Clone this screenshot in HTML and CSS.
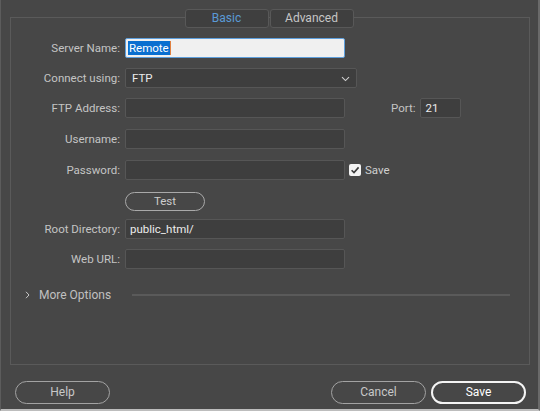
FILE: index.html
```html
<!DOCTYPE html>
<html>
<head>
<meta charset="utf-8">
<link rel="stylesheet" href="styles.css">
</head>
<body>
<div class="dialog">
  <div class="panel">
    <div class="tabs">
      <div class="tab tab-active">Basic</div>
      <div class="tab">Advanced</div>
    </div>
    <div class="form">
      <div class="row r-first">
        <label class="label">Server Name:</label>
        <div class="field field-focus"><span class="sel">Remote</span><span class="caret"></span></div>
      </div>
      <div class="row r10">
        <label class="label">Connect using:</label>
        <div class="field select">
          <span>FTP</span>
          <svg class="chev" width="9" height="6" viewBox="0 0 9 6"><path d="M1 1.2 L4.5 4.6 L8 1.2" fill="none" stroke="#cfcfcf" stroke-width="1.1"/></svg>
        </div>
      </div>
      <div class="row r10">
        <label class="label">FTP Address:</label>
        <div class="field"></div>
        <label class="label-port">Port:</label>
        <div class="field port">21</div>
      </div>
      <div class="row r11">
        <label class="label">Username:</label>
        <div class="field"></div>
      </div>
      <div class="row r11">
        <label class="label">Password:</label>
        <div class="field"></div>
        <span class="check">
          <svg width="12" height="12" viewBox="0 0 12 12"><rect x="0" y="0" width="12" height="12" rx="2" fill="#f2f2f2"/><path d="M2.6 6.2 L5 8.6 L9.6 3.4" fill="none" stroke="#3a3a3a" stroke-width="1.6"/></svg>
        </span>
        <span class="check-label">Save</span>
      </div>
      <div class="row r11">
        <span class="label"></span>
        <div class="btn-test">Test</div>
      </div>
      <div class="row r8">
        <label class="label">Root Directory:</label>
        <div class="field">public_html/</div>
      </div>
      <div class="row r10">
        <label class="label">Web URL:</label>
        <div class="field"></div>
      </div>
      <div class="more">
        <svg class="more-chev" width="5" height="8" viewBox="0 0 5 8"><path d="M1 0.8 L4 4 L1 7.2" fill="none" stroke="#c8c8c8" stroke-width="1"/></svg>
        <span class="more-text">More Options</span>
        <span class="more-line"></span>
      </div>
    </div>
  </div>
  <div class="actions">
    <div class="btn">Help</div>
    <div class="spacer"></div>
    <div class="btn">Cancel</div>
    <div class="btn btn-primary">Save</div>
  </div>
</div>
</body>
</html>
```

FILE: styles.css
```css
* { box-sizing: border-box; }
html, body {
  margin: 0;
  padding: 0;
  background: #474747;
}
body {
  font-family: Roboto, "Noto Sans", sans-serif;
  font-size: 11.5px;
  color: #c4c4c4;
}
.dialog {
  width: 540px;
  height: 411px;
  background: #474747;
  border-left: 1px solid #5c5c5c;
  border-right: 2px solid #6a6a6a;
  border-bottom: 2px solid #bdbdbd;
  display: flex;
  flex-direction: column;
}
.panel {
  margin: 17px 0 0 9px;
  width: 520px;
  height: 348px;
  border: 1px solid #5a5a5a;
  display: flex;
  flex-direction: column;
}
.tabs {
  display: flex;
  justify-content: center;
  gap: 1px;
  margin-top: -9px;
  margin-left: -2px;
}
.tab {
  width: 84px;
  height: 19px;
  background: #3f3f3f;
  border: 1px solid #585858;
  border-radius: 3px;
  color: #c6c6c6;
  font-size: 12px;
  line-height: 17px;
  text-align: center;
}
.tab-active { color: #5a9ad6; }
.form { display: flex; flex-direction: column; }
.row {
  display: flex;
  align-items: center;
  height: 20px;
}
.r-first { margin-top: 10px; }
.r8 { margin-top: 8px; }
.r10 { margin-top: 10px; }
.r11 { margin-top: 11px; }
.label {
  width: 109px;
  margin-right: 5px;
  text-align: right;
  white-space: nowrap;
}
.field {
  width: 220px;
  height: 20px;
  background: #3e3e3e;
  border: 1px solid #565656;
  border-radius: 2px;
  color: #ececec;
  padding: 0 4px;
  line-height: 18px;
  display: flex;
  align-items: center;
}
.field-focus {
  background: #f0f0f0;
  border-color: #5e9fdc;
  padding-left: 2px;
}
.sel {
  background: #0a6fd0;
  color: #ffffff;
  line-height: 14px;
  padding: 0 1px;
}
.caret {
  display: inline-block;
  width: 1px;
  height: 14px;
  background: #e08040;
}
.select {
  width: 232px;
  justify-content: space-between;
  padding: 0 6px 0 6px;
}
.chev { margin-top: 1px; }
.label-port {
  margin-left: 46px;
  margin-right: 5px;
}
.port { width: 41px; }
.check {
  display: flex;
  margin-left: 4px;
}
.check-label {
  margin-left: 4px;
  color: #d0d0d0;
}
.btn-test {
  width: 80px;
  height: 19px;
  border: 1px solid #a9a9a9;
  border-radius: 10px;
  text-align: center;
  line-height: 17px;
  color: #cdcdcd;
}
.more {
  display: flex;
  align-items: center;
  height: 18px;
  margin-top: 17px;
  padding-left: 14px;
}
.more-chev { margin-right: 9px; }
.more-text { color: #c0c0c0; font-size: 12px; }
.more-line {
  flex: 1;
  height: 2px;
  background: #5a5a5a;
  margin-left: 21px;
  margin-right: 19px;
}
.actions {
  display: flex;
  align-items: center;
  margin-top: 16px;
  padding-left: 14px;
  gap: 5px;
}
.spacer { flex: 1; }
.btn {
  width: 95px;
  height: 23px;
  border: 1px solid #a3a3a3;
  border-radius: 12px;
  text-align: center;
  line-height: 21px;
  color: #c8c8c8;
  font-size: 12px;
}
.btn-primary {
  border: 2px solid #f4f4f4;
  color: #ffffff;
  line-height: 19px;
  margin-right: 12px;
}
```
